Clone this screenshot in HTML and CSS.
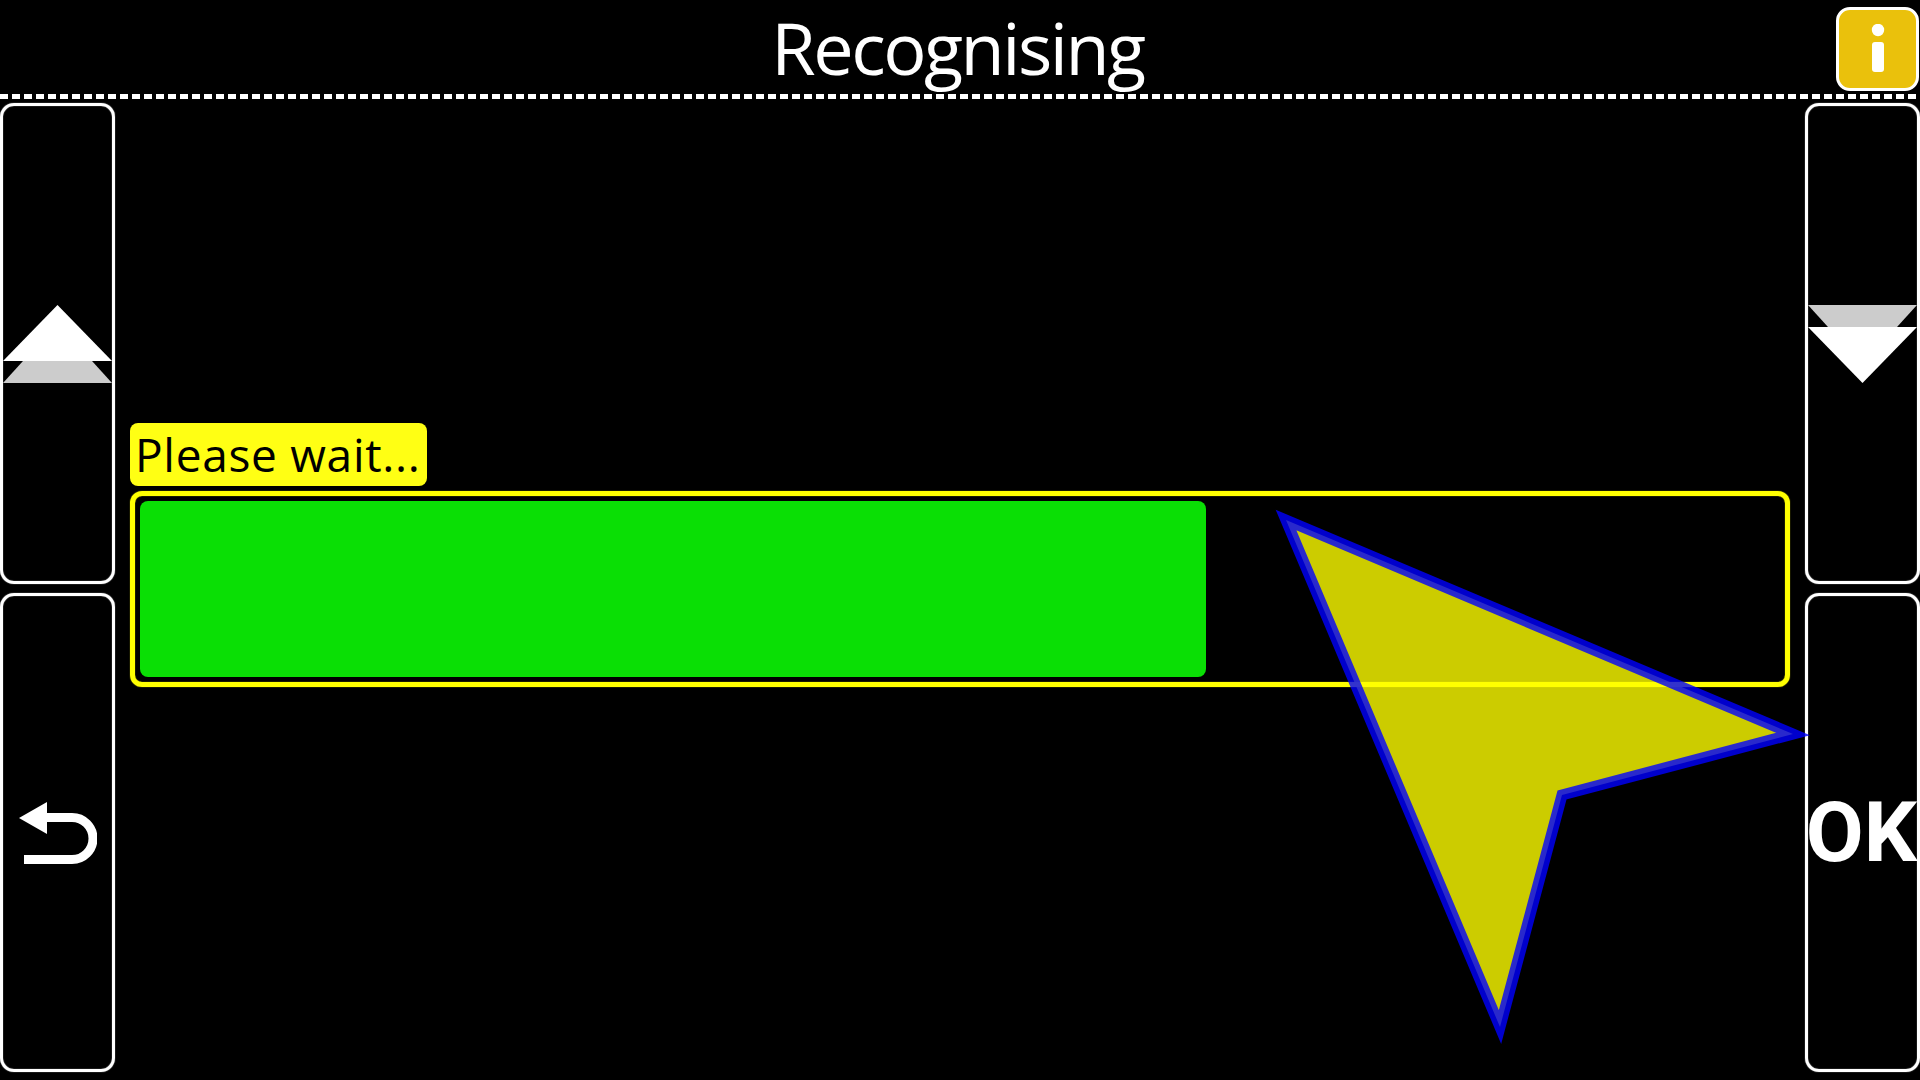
FILE: index.html
```html
<!DOCTYPE html>
<html lang="en">
<head>
  <meta charset="UTF-8">
  <title>Recognising</title>
  <link rel="stylesheet" href="styles.css">
</head>
<body>

  <header class="header">
    <h1 class="title">Recognising</h1>
    <div class="info-btn">
      <svg width="14" height="50" viewBox="0 0 14 50">
        <circle cx="7" cy="6" r="6.2" fill="#fff"/>
        <rect x="1" y="18" width="12" height="30" rx="3" fill="#fff"/>
      </svg>
    </div>
  </header>
  <div class="divider"></div>

  <main class="layout">
    <div class="side">
      <div class="btn">
        <svg width="109" height="78" viewBox="0 0 109 78">
          <polygon points="20,56 89,56 109,78 0,78" fill="#ccc"/>
          <polygon points="54.5,0 109,56 0,56" fill="#fff"/>
        </svg>
      </div>
      <div class="btn">
        <svg width="78" height="62" viewBox="0 0 78 62">
          <polygon points="0,16 28,0 28,32" fill="#fff"/>
          <path d="M26 15.5H53A21 21 0 0 1 53 57.5H5" fill="none" stroke="#fff" stroke-width="9"/>
        </svg>
      </div>
    </div>

    <section class="content">
      <div class="label">Please wait...</div>
      <div class="progress">
        <div class="progress-fill" style="width: 65%"></div>
      </div>
    </section>

    <div class="side">
      <div class="btn">
        <svg width="109" height="78" viewBox="0 0 109 78">
          <polygon points="0,0 109,0 89,22 20,22" fill="#ccc"/>
          <polygon points="0,22 109,22 54.5,78" fill="#fff"/>
        </svg>
      </div>
      <div class="btn ok">OK</div>
    </div>
  </main>

  <svg class="pointer" width="1920" height="1080" viewBox="0 0 1920 1080">
    <polygon points="1286,520 1793,734 1562,795 1500,1027" fill="#ff0" fill-opacity="0.8" stroke="#00f" stroke-opacity="0.8" stroke-width="11" stroke-miterlimit="10"/>
  </svg>

</body>
</html>
```

FILE: styles.css
```css
html, body {
  margin: 0;
  height: 100%;
}

body {
  width: 1920px;
  height: 1080px;
  background: #000;
  color: #fff;
  font-family: "Open Sans", "DejaVu Sans", sans-serif;
  overflow: hidden;
  position: relative;
}

.header {
  height: 94px;
  display: grid;
  grid-template-columns: 1fr auto 1fr;
  align-items: start;
}

.title {
  grid-column: 2;
  margin: 0;
  padding-right: 5px;
  font-size: 72px;
  font-weight: 500;
  letter-spacing: -2.5px;
  line-height: 95px;
}

.info-btn {
  grid-column: 3;
  justify-self: end;
  width: 83px;
  height: 84px;
  margin-right: 1px;
  margin-top: 7px;
  box-sizing: border-box;
  border: 3px solid #fff;
  border-radius: 14px;
  background: #eac10c;
  display: flex;
  align-items: center;
  justify-content: center;
}

.divider {
  height: 5px;
  background: repeating-linear-gradient(90deg, #fff 0, #fff 8px, transparent 8px, transparent 12px);
}

.layout {
  display: grid;
  grid-template-columns: 115px 1fr 115px;
  margin-top: 4px;
  height: 969px;
}

.side {
  display: grid;
  grid-template-columns: 115px;
  grid-template-rows: 481px 479px;
  row-gap: 9px;
}

.btn {
  box-sizing: border-box;
  border: 3px solid #fff;
  border-radius: 14px;
  box-shadow: 0 0 1px #fff, inset 0 0 1px #fff;
  display: flex;
  align-items: center;
  justify-content: center;
}

.ok {
  padding-right: 2px;
  font-family: Roboto, "Open Sans", sans-serif;
  font-size: 84px;
  font-weight: 700;
  line-height: 1;
}

.content {
  padding: 320px 15px 0;
}

.label {
  box-sizing: border-box;
  width: 297px;
  height: 63px;
  margin-bottom: 5px;
  padding-left: 5px;
  border-radius: 8px;
  background: #ffff14;
  color: #000;
  font-size: 46px;
  letter-spacing: 0.7px;
  line-height: 63px;
  white-space: nowrap;
}

.progress {
  box-sizing: border-box;
  height: 196px;
  padding: 5px;
  border: 5px solid #ffff00;
  border-radius: 12px;
  box-shadow: 0 0 1px #ff0, inset 0 0 1px #ff0;
}

.progress-fill {
  height: 100%;
  border-radius: 8px;
  background: #0adf05;
}

.pointer {
  position: absolute;
  top: 0;
  left: 0;
  pointer-events: none;
}
```
